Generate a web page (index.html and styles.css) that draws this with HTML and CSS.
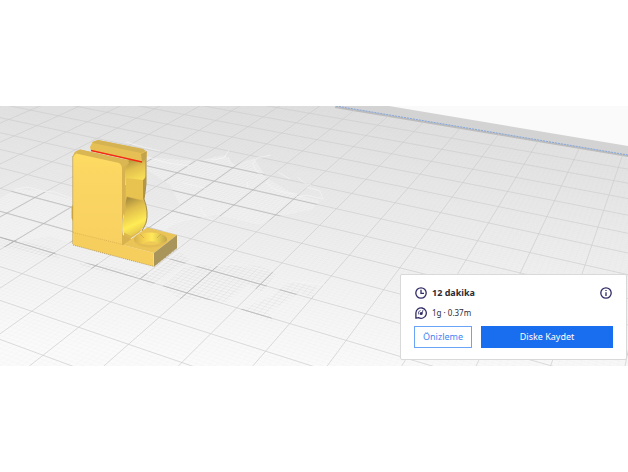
FILE: index.html
```html
<!DOCTYPE html>
<html lang="tr">
<head>
<meta charset="utf-8">
<title>Dilimleme</title>
<link rel="stylesheet" href="styles.css">
</head>
<body>
<main class="stage">
  <svg class="scene" viewBox="0 106 628 260" preserveAspectRatio="xMidYMid slice" aria-hidden="true">
    <defs>
      <linearGradient id="floor" x1="0.65" y1="0" x2="0.45" y2="1">
        <stop offset="0" stop-color="#dfdfdf"/><stop offset=".45" stop-color="#ececec"/><stop offset="1" stop-color="#fafafa"/>
      </linearGradient>
      <linearGradient id="face" x1="0" y1="0" x2="0" y2="1">
        <stop offset="0" stop-color="#fedc62"/><stop offset=".25" stop-color="#fbd662"/><stop offset="1" stop-color="#f8d061"/>
      </linearGradient>
      <linearGradient id="lobe" x1="0" y1="0" x2=".3" y2="1">
        <stop offset="0" stop-color="#a98f3e"/><stop offset=".4" stop-color="#e2c04e"/><stop offset="1" stop-color="#ffe85a"/>
      </linearGradient>
      <linearGradient id="lobe2" x1=".3" y1="0" x2=".6" y2="1">
        <stop offset="0" stop-color="#a58b3d"/><stop offset=".3" stop-color="#e0bd4b"/><stop offset=".7" stop-color="#ffec55"/><stop offset="1" stop-color="#dfbd4d"/>
      </linearGradient>
      <linearGradient id="bowl" x1="0" y1="0" x2="1" y2="0">
        <stop offset="0" stop-color="#d5b04c"/><stop offset=".3" stop-color="#f5d052"/><stop offset=".55" stop-color="#ffe95a"/><stop offset="1" stop-color="#c5a54b"/>
      </linearGradient>
      <clipPath id="light-patches">
        <path d="M0 199L15 189 42 191 74 200V244L50 236 0 246ZM147 157L196 161 225 155 233 165 254 158 267 178 292 193 320 201 312 210 280 216 258 225 215 215 180 222 147 240V225L180 206 170 185 147 170Z"/>
      </clipPath>
      <clipPath id="dark-patches">
        <path d="M0 237L50 247 60 259 40 255 0 246ZM80 263L96 264 150 274 180 252 190 260 150 286 140 279 80 266ZM162 287L184 268 205 265 230 264 262 266 276 274 262 292 248 284 225 303 211 300 180 299ZM290 282L318 286 312 298 300 292 285 302 268 312 274 322 240 310 270 297Z"/>
      </clipPath>
    </defs>
    <rect y="106" width="628" height="260" fill="#fafafa"/>
    <path d="M0 106H389L628 146V366H0Z" fill="#d3d3d3"/>
    <path d="M0 106H335L628 155V366H0Z" fill="url(#floor)"/>
    <path d="M335 107L628 156" class="edge-shadow"/>
    <path id="fine" class="grid-fine"/>
    <path id="major" class="grid-major"/>
    <g clip-path="url(#light-patches)">
      <path id="mesh-light" class="grid-mesh"/>
      <path id="major-light" class="grid-dark"/>
    </g>
    <g clip-path="url(#dark-patches)">
      <path id="mesh-dark" class="grid-mesh-dark"/>
      <path id="major-dark" class="grid-dark"/>
    </g>
    <path class="scratch" d="M15 189L28 187 42 191 55 192 73 199M126 142L143 147 160 151M147 157L168 163 190 166M183 183L205 188M211 160L224 158 229 150M228 157Q229 163 234 165M252 164L257 158 271 155M253 164Q256 174 263 175M266 182Q274 193 297 194M278 172L290 179M298 177Q303 184 311 185M307 187L320 191 323 199 306 195 296 197M247 182L248 188M200 207Q203 216 213 220M212 266L235 264 266 270M290 281L325 285"/>
    <path d="M336 106L628 155" class="edge"/>

    <g class="model">
      <path d="M124 160L146 157 146 186 144 199 147 211 146 222 140 232 124 243Z" fill="#dcb84f"/>
      <path d="M129 160L143 161.500 146 160 146 174 142 187 125 185 125 169Z" fill="url(#lobe)"/>
      <path d="M126 178L143 180 143 200 126 196Z" fill="#e8c350"/>
      <path d="M143 180L146 177 145 196 143 200Z" fill="#b49744"/>
      <path d="M127 197L144 201Q149 212 145 225Q140 232 131 236L123 232Q121 224 124 216Q127 211 125 204Z" fill="url(#lobe2)"/>
      <path d="M146 155V184L144 199Q149 212 146 223L142 231" fill="none" stroke="#a99045"/>
      <path d="M90 147L92.500 142 98 140 143 149 147 153 146 159 142 162 91 151Z" fill="#e6c055"/>
      <path d="M92.500 142L98 140 143 149 146 151 141 153 93 143Z" fill="#d5b252"/>
      <path d="M141 154L147 151 146 159 142 162Z" fill="#c3a44d"/>
      <path d="M91 150.500L142 162" stroke="#f32b12" stroke-width="1.400"/>
      <path d="M71.500 208V218L73 221V205Z" fill="#d5ad3f"/>
      <path d="M73 232V156L75 152 80 149.500 127 160 129 163 125 169 125 200Q127 207 124 213Q121 224 123 235L134 240 123 246Z" fill="#d8b24e"/>
      <path d="M73 156L75 152 80 149.500 127 160 129 163 122 168Z" fill="#dbb753"/>
      <path d="M73 157L76 153.500 119 163Q122 165 122 169V245L73 233Z" fill="url(#face)"/>
      <path d="M72.700 156V244" stroke="#bd9c46" stroke-width=".7"/>
      <path d="M123 245L147 227.500 177 235 154 253Z" fill="#ebc457"/>
      <path d="M73 232L123 245 154 253V266.500L73 245Z" fill="#f6ce5e"/>
      <path d="M154 253L177 235V248L154 266.500Z" fill="#a9955a"/>
      <path d="M73 232.500L123 244.500" stroke="#d2aa4d" stroke-width=".7" stroke-dasharray="1 1"/>
      <path d="M153.500 253.500V266" stroke="#ffdc68"/>
      <path d="M73 245L154 266.500 177 248.500" fill="none" stroke="#9e8747" stroke-width=".7" stroke-dasharray="1 1"/>
      <ellipse cx="150.500" cy="239.500" rx="16.500" ry="7" fill="url(#bowl)"/>
      <path d="M140 234L144 238M161 234L157 238" fill="none" stroke="#c9a747" stroke-width=".7"/>
      <path d="M134 241Q137 247 150 247.500Q164 247 167 241Q160 245 150 244Q140 245 134 241Z" fill="#e3bd53"/>
      <path d="M143 243.500Q151 239 159 243.500Q151 247 143 243.500Z" fill="#f0c957"/>
    </g>
  </svg>

  <section class="card" aria-label="Dilimleme sonucu">
    <div class="row">
      <svg class="icon" viewBox="0 0 12 12" aria-hidden="true"><circle cx="6" cy="6" r="5.200"/><path d="M6 2.800V6.300H9"/></svg>
      <strong class="time">12 dakika</strong>
      <button class="info" type="button" aria-label="Bilgi">
        <svg class="icon" viewBox="0 0 12 12" aria-hidden="true"><circle cx="6" cy="6" r="5.200"/><path d="M6 5.200V9M6 2.900V4.100"/></svg>
      </button>
    </div>
    <div class="row">
      <svg class="icon" viewBox="0 0 12 12" aria-hidden="true"><path d="M.9 11.700V6A5.200 5.200 0 1 1 3.500 10.600L1 11.200"/><path class="thin" d="M3.800 7.500A2.700 2.700 0 0 1 5.500 3.500M7.200 6L8 3"/><circle class="dot" cx="6.200" cy="6.500" r="1.500"/></svg>
      <span class="usage">1g · 0.37m</span>
    </div>
    <div class="actions">
      <button class="button preview" type="button">Önizleme</button>
      <button class="button save" type="button">Diske Kaydet</button>
    </div>
  </section>
</main>
<script src="grid.js"></script>
</body>
</html>
```
FILE: grid.js
```js
// Build plate grid in perspective: two pencils of lines, each through its vanishing point.
const HORIZON = -195;
const VP_ROWS = -1450;
const VP_COLS = 742;

// A row line crosses x=418 at a height that falls off with 1/distance.
function row(n) {
  const y = 1 / (0.00317 - 0.0001145 * n) + HORIZON;
  const slope = (y - HORIZON) / (418 - VP_ROWS);
  const at = x => HORIZON + slope * (x - VP_ROWS);
  return `M0 ${at(0).toFixed(1)}L628 ${at(628).toFixed(1)}`;
}

// Column lines are evenly spaced on y=135 and start at the back edge.
function column(m) {
  const k = (498 + 43.8 * m - VP_COLS) / (135 - HORIZON);
  const s = 1 / 0.00317 / (418 - VP_ROWS);
  const dy = s * (VP_COLS - VP_ROWS) / (1 - s * k);
  return `M${(VP_COLS + k * dy).toFixed(1)} ${(HORIZON + dy).toFixed(1)}L${(VP_COLS + k * 561).toFixed(1)} 366`;
}

function lines(step) {
  let d = '';
  for (let n = step; n <= 17; n += step) d += row(n);
  for (let m = -14; m <= 5; m += step) d += column(m);
  return d;
}

const major = lines(1);
const fine = lines(0.1);
for (const id of ['major', 'major-light', 'major-dark']) {
  document.getElementById(id).setAttribute('d', major);
}
for (const id of ['fine', 'mesh-light', 'mesh-dark']) {
  document.getElementById(id).setAttribute('d', fine);
}
```
FILE: styles.css
```css
* {
  box-sizing: border-box;
}

body {
  margin: 0;
  min-height: 100vh;
  display: flex;
  align-items: center;
  background: #fff;
  font-family: "Noto Sans", sans-serif;
  color: #2b2b35;
}

.stage {
  position: relative;
  width: 100%;
}

.scene {
  display: block;
  width: 100%;
  height: auto;
}

.grid-fine,
.grid-major,
.grid-mesh,
.grid-mesh-dark,
.grid-dark,
.scratch,
.edge,
.edge-shadow {
  fill: none;
}

.grid-fine {
  stroke: #c8c8c8;
  stroke-width: 0.4;
  opacity: 0.14;
}

.grid-major {
  stroke: #cdcdcd;
  stroke-width: 1;
  opacity: 0.65;
}

.grid-mesh {
  stroke: #fff;
  stroke-width: 0.6;
  opacity: 0.5;
}

.grid-mesh-dark {
  stroke: #b4b4b4;
  stroke-width: 0.4;
  opacity: 0.25;
}

.grid-dark {
  stroke: #b0b0b0;
  stroke-width: 0.8;
  opacity: 0.8;
}

.scratch {
  stroke: #f6f6f6;
  stroke-width: 0.8;
  opacity: 0.8;
}

.edge {
  stroke: #86a8de;
  stroke-width: 1;
  stroke-dasharray: 2 1;
}

.edge-shadow {
  stroke: #bcbcbc;
  stroke-width: 2;
}

.card {
  position: absolute;
  right: 1px;
  bottom: 6px;
  width: 227px;
  display: flex;
  flex-direction: column;
  gap: 6px;
  padding: 11px 13px;
  background: #fff;
  border: 1px solid #d9d9d9;
  border-radius: 2px;
}

.row {
  display: flex;
  align-items: center;
  gap: 4px;
  height: 14px;
}

.icon {
  display: block;
  width: 14px;
  height: 14px;
  padding: 1px;
  fill: none;
  stroke: #302c66;
  stroke-width: 1.3;
}

.icon .thin {
  stroke-width: 0.8;
}

.icon .dot {
  fill: #302c66;
  stroke: none;
}

.time {
  font-size: 9px;
  line-height: 14px;
}

.usage {
  font-size: 8px;
  line-height: 14px;
}

.info {
  margin-left: auto;
  padding: 0;
  border: 0;
  background: none;
}

.actions {
  display: flex;
  gap: 9px;
}

.button {
  height: 22px;
  padding: 0 8px;
  border: 1px solid #196ef0;
  font-family: inherit;
  font-size: 9px;
  line-height: 20px;
}

.preview {
  border-color: #6aa3f8;
  background: #fff;
  color: #3f86f4;
}

.save {
  flex: 1;
  background: #196ef0;
  color: #fff;
}
```
